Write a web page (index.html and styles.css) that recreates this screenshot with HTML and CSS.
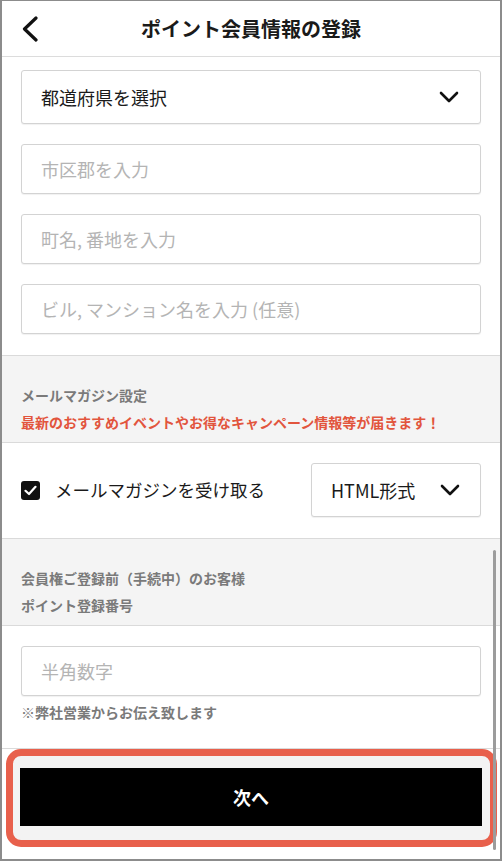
FILE: index.html
```html
<!DOCTYPE html>
<html lang="ja">
<head>
<meta charset="utf-8">
<title>ポイント会員情報の登録</title>
<link rel="stylesheet" href="styles.css">
</head>
<body>
<div class="frame">
  <header class="topbar">
    <span class="back">
      <svg width="18" height="26" viewBox="0 0 18 26"><path d="M15 2 L3.5 13 L15 24" fill="none" stroke="#111" stroke-width="3.2" stroke-linecap="round" stroke-linejoin="round"/></svg>
    </span>
    <h1 class="title">ポイント会員情報の登録</h1>
    <span></span>
  </header>

  <main class="content">
    <section class="block address">
      <div class="select select-wide">
        <span class="select-text">都道府県を選択</span>
        <svg class="chev" width="20" height="12" viewBox="0 0 20 12"><path d="M2 2 L10 10 L18 2" fill="none" stroke="#111" stroke-width="2.6" stroke-linecap="round" stroke-linejoin="round"/></svg>
      </div>
      <input class="input" type="text" placeholder="市区郡を入力">
      <input class="input" type="text" placeholder="町名, 番地を入力">
      <input class="input" type="text" placeholder="ビル, マンション名を入力 (任意)">
    </section>

    <section class="block gray">
      <p class="label">メールマガジン設定</p>
      <p class="notice">最新のおすすめイベントやお得なキャンペーン情報等が届きます！</p>
    </section>

    <section class="block mailrow">
      <label class="check">
        <span class="box">
          <svg width="13" height="11" viewBox="0 0 13 11"><path d="M1.5 5.8 L5 9 L11.5 1.8" fill="none" stroke="#fff" stroke-width="2.2" stroke-linecap="round" stroke-linejoin="round"/></svg>
        </span>
        <span class="check-text">メールマガジンを受け取る</span>
      </label>
      <div class="select select-small">
        <span class="select-text">HTML形式</span>
        <svg class="chev" width="20" height="12" viewBox="0 0 20 12"><path d="M2 2 L10 10 L18 2" fill="none" stroke="#111" stroke-width="2.6" stroke-linecap="round" stroke-linejoin="round"/></svg>
      </div>
    </section>

    <section class="block gray">
      <p class="label">会員権ご登録前（手続中）のお客様</p>
      <p class="label">ポイント登録番号</p>
    </section>

    <section class="block number">
      <input class="input" type="text" placeholder="半角数字">
      <p class="note">※弊社営業からお伝え致します</p>
    </section>

    <footer class="footer">
      <div class="highlight">
        <button class="next" type="button">次へ</button>
      </div>
    </footer>
  </main>
  <div class="scrollbar"></div>
</div>
</body>
</html>
```

FILE: styles.css
```css
* { box-sizing: border-box; }

html, body {
  margin: 0;
  padding: 0;
  background: #ffffff;
}

body {
  font-family: "Noto Sans CJK JP", "Noto Sans", sans-serif;
  color: #111;
}

.frame {
  position: relative;
  width: 502px;
  height: 861px;
  border-top: 1px solid #8c8c8c;
  border-left: 2px solid #8c8c8c;
  border-right: 2px solid #8c8c8c;
  border-bottom: 2px solid #8c8c8c;
  overflow: hidden;
  background: #fff;
}

.topbar {
  display: grid;
  grid-template-columns: 60px 1fr 60px;
  align-items: center;
  height: 56px;
  padding-left: 19px;
  border-bottom: 1px solid #dcdcdc;
}

.back {
  display: flex;
  align-items: center;
  height: 26px;
}

.title {
  margin: 0;
  text-align: center;
  font-size: 20px;
  font-weight: 700;
  line-height: 1;
  color: #1a1a1a;
  padding-right: 19px;
}

.content {
  display: flex;
  flex-direction: column;
}

.block {
  border-top: 1px solid #dadada;
}

.address {
  border-top: none;
  display: flex;
  flex-direction: column;
  gap: 20px;
  padding: 13px 19px 21px;
}

.select {
  display: flex;
  align-items: center;
  justify-content: space-between;
  border: 1px solid #d3d3d3;
  border-radius: 3px;
  background: #fff;
  box-shadow: 0 1px 1px rgba(0,0,0,0.06);
}

.select-wide {
  height: 54px;
  padding: 0 21px 0 19px;
}

.select-text {
  font-size: 18px;
  color: #1a1a1a;
  line-height: 1;
}

.input {
  display: block;
  width: 100%;
  height: 50px;
  border: 1px solid #d3d3d3;
  border-radius: 3px;
  padding: 0 19px;
  font-family: "Noto Sans CJK JP", "Noto Sans", sans-serif;
  font-size: 18px;
  color: #111;
  background: #fff;
  box-shadow: 0 1px 1px rgba(0,0,0,0.06);
  outline: none;
}

.input::placeholder {
  color: #b4b4b4;
}

.gray {
  background: #f4f4f4;
  padding: 29px 19px 10px;
  display: flex;
  flex-direction: column;
  gap: 7px;
}

.label {
  margin: 0;
  font-size: 14px;
  line-height: 20px;
  font-weight: 700;
  color: #7a7a7a;
}

.notice {
  margin: 0;
  font-size: 14px;
  line-height: 20px;
  font-weight: 700;
  color: #e2553d;
}

.mailrow {
  display: flex;
  align-items: center;
  justify-content: space-between;
  padding: 20px 19px 21px;
}

.check {
  display: flex;
  align-items: center;
  gap: 15px;
}

.box {
  display: flex;
  align-items: center;
  justify-content: center;
  width: 19px;
  height: 19px;
  background: #111;
  border-radius: 3px;
}

.check-text {
  font-size: 17.5px;
  line-height: 1;
  color: #1a1a1a;
}

.select-small {
  width: 170px;
  height: 54px;
  padding: 0 20px 0 19px;
}

.number {
  padding: 20px 19px 26px;
}

.note {
  margin: 6px 0 0;
  font-size: 14px;
  line-height: 20px;
  font-weight: 700;
  color: #7a7a7a;
}

.footer {
  border-top: 1px solid #dadada;
  padding: 0 3px 0 4px;
  background: #fff;
}

.highlight {
  border: 7px solid #e8604c;
  border-radius: 15px;
  background: #f3f3f3;
  padding: 12px 8px 14px 7px;
}

.next {
  display: flex;
  align-items: center;
  justify-content: center;
  width: 100%;
  height: 58px;
  border: 0;
  background: #000;
  color: #fff;
  font-family: "Noto Sans CJK JP", "Noto Sans", sans-serif;
  font-size: 18px;
  font-weight: 700;
  cursor: pointer;
}

.scrollbar {
  position: absolute;
  left: 491px;
  top: 549px;
  width: 3px;
  height: 300px;
  border-radius: 2px;
  background: #9c9c9c;
}
```
